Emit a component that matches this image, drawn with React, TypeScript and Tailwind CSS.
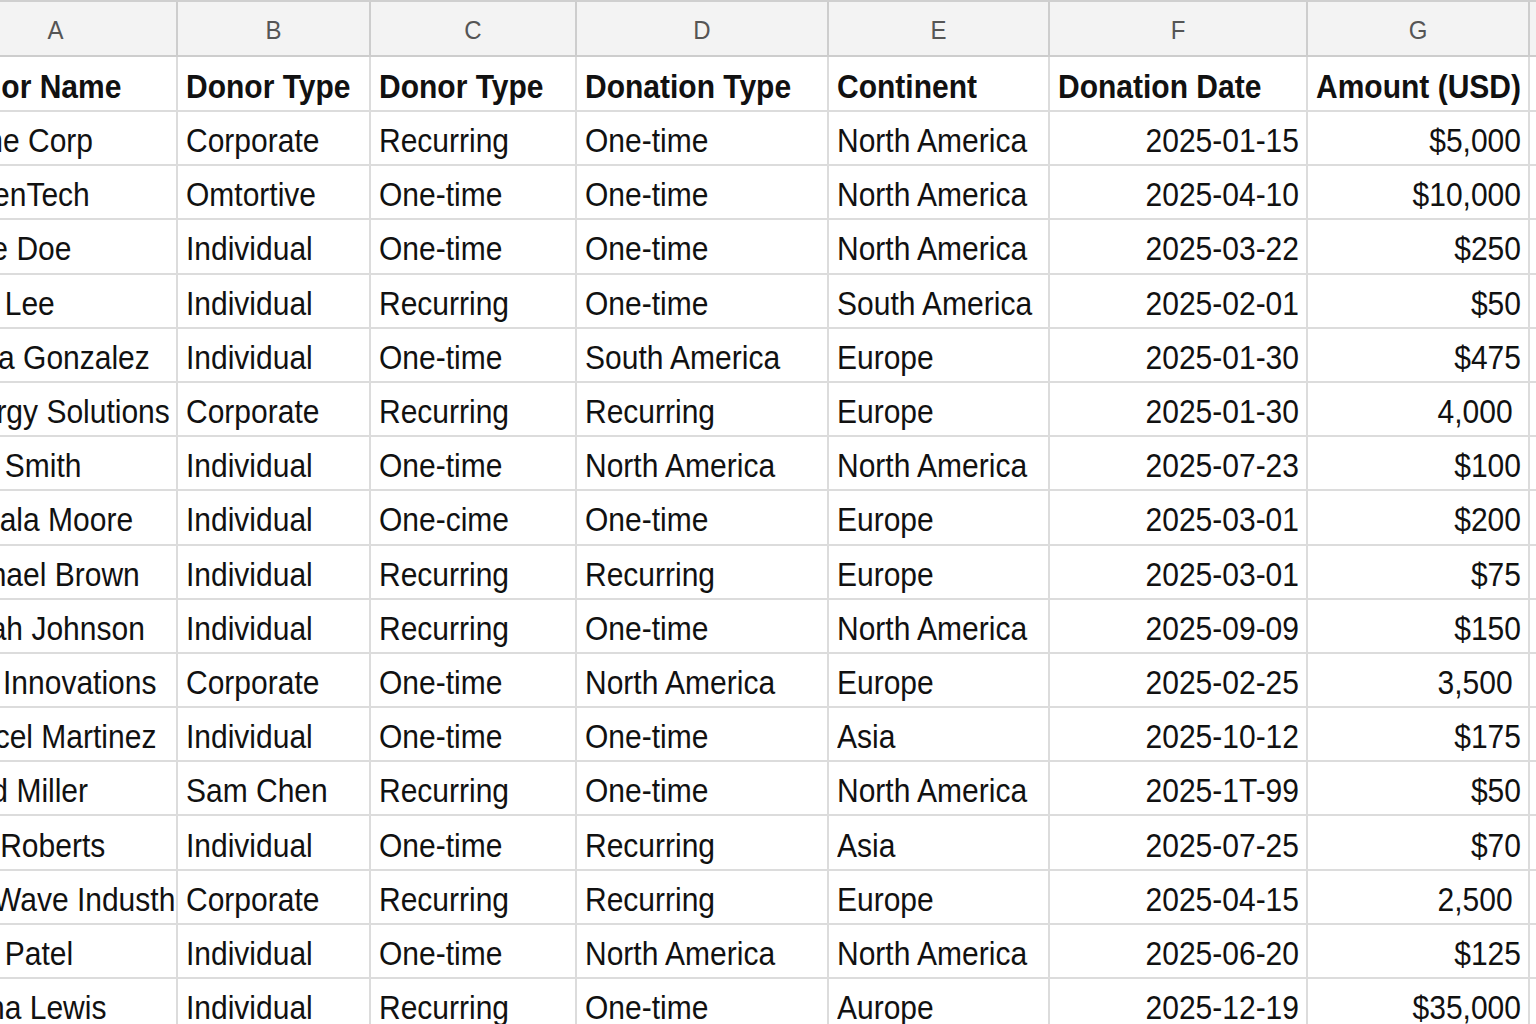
import React from 'react';

type Row = [string, string, string, string, string, string, string];

const letters = ['A', 'B', 'C', 'D', 'E', 'F', 'G', ''];

const headers: Row = [
  'Donor Name',
  'Donor Type',
  'Donor Type',
  'Donation Type',
  'Continent',
  'Donation Date',
  'Amount (USD)',
];

const rows: Row[] = [
  ['Acme Corp', 'Corporate', 'Recurring', 'One-time', 'North America', '2025-01-15', '$5,000'],
  ['GreenTech', 'Omtortive', 'One-time', 'One-time', 'North America', '2025-04-10', '$10,000'],
  ['Jane Doe', 'Individual', 'One-time', 'One-time', 'North America', '2025-03-22', '$250'],
  ['Ben Lee', 'Individual', 'Recurring', 'One-time', 'South America', '2025-02-01', '$50'],
  ['Lucia Gonzalez', 'Individual', 'One-time', 'South America', 'Europe', '2025-01-30', '$475'],
  ['Energy Solutions I.', 'Corporate', 'Recurring', 'Recurring', 'Europe', '2025-01-30', '4,000\u00a0'],
  ['Ann Smith', 'Individual', 'One-time', 'North America', 'North America', '2025-07-23', '$100'],
  ['Jamala Moore', 'Individual', 'One-cime', 'One-time', 'Europe', '2025-03-01', '$200'],
  ['Michael Brown', 'Individual', 'Recurring', 'Recurring', 'Europe', '2025-03-01', '$75'],
  ['Sarah Johnson', 'Individual', 'Recurring', 'One-time', 'North America', '2025-09-09', '$150'],
  ['Zen Innovations', 'Corporate', 'One-time', 'North America', 'Europe', '2025-02-25', '3,500\u00a0'],
  ['Marcel Martinez', 'Individual', 'One-time', 'One-time', 'Asia', '2025-10-12', '$175'],
  ['Todd Miller', 'Sam Chen', 'Recurring', 'One-time', 'North America', '2025-1T-99', '$50'],
  ['Tim Roberts', 'Individual', 'One-time', 'Recurring', 'Asia', '2025-07-25', '$70'],
  ['SkyWave Industh', 'Corporate', 'Recurring', 'Recurring', 'Europe', '2025-04-15', '2,500\u00a0'],
  ['Ken Patel', 'Individual', 'One-time', 'North America', 'North America', '2025-06-20', '$125'],
  ['Diana Lewis', 'Individual', 'Recurring', 'One-time', 'Aurope', '2025-12-19', '$35,000'],
];

const gridCols =
  'grid grid-cols-[243px_193px_206px_252px_221px_258px_222px_60px]';

const Cell = ({
  text,
  col,
  bold,
}: {
  text: string;
  col: number;
  bold?: boolean;
}) => {
  // numbers sit on the right, header labels stay left
  const right = !bold && (col === 5 || col === 6);
  return (
    <div
      className={`flex items-center overflow-hidden whitespace-nowrap border-r-2 border-b-2 border-[#dcdcdc] pt-[6px] ${
        right ? 'justify-end pl-[8px] pr-[7px]' : 'justify-start pl-[8px] pr-[2px]'
      }`}
    >
      <span
        className={`inline-block scale-y-110 text-[30px] leading-none text-[#111] ${
          bold ? 'font-bold' : ''
        }`}
      >
        {text}
      </span>
    </div>
  );
};

export default function App() {
  return (
    <div
      className="h-[1024px] w-[1536px] overflow-hidden bg-white"
      style={{ fontFamily: '"Liberation Sans", Arial, sans-serif' }}
    >
      <div className="-ml-[65px] w-[1700px]">
        {/* column letters */}
        <div className={`${gridCols} h-[57px] border-t-2 border-[#cfcfcf] bg-[#f3f3f3]`}>
          {letters.map((l, i) => (
            <div
              key={i}
              className="flex items-center justify-center border-r-2 border-b-2 border-[#cdcdcd] pt-[2px]"
            >
              <span className="inline-block scale-y-110 text-[24px] text-[#555]">{l}</span>
            </div>
          ))}
        </div>

        {/* header row */}
        <div className={`${gridCols} h-[55px]`}>
          {headers.map((h, i) => (
            <Cell key={i} text={h} col={i} bold />
          ))}
          <div className="border-b-2 border-[#dcdcdc]" />
        </div>

        {/* data */}
        {rows.map((r, ri) => (
          <div key={ri} className={`${gridCols} h-[54.2px]`}>
            {r.map((v, ci) => (
              <Cell key={ci} text={v} col={ci} />
            ))}
            <div className="border-b-2 border-[#dcdcdc]" />
          </div>
        ))}
      </div>
    </div>
  );
}
